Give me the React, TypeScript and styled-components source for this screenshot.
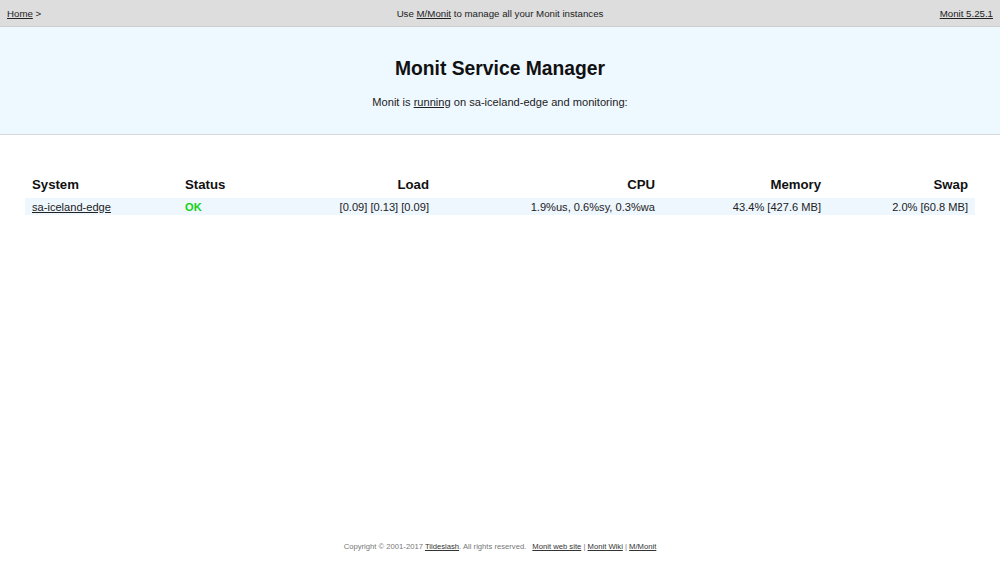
import styled, { createGlobalStyle } from "styled-components";

const GlobalStyle = createGlobalStyle`
  html, body {
    margin: 0;
    padding: 0;
    background: #ffffff;
    font-family: "Liberation Sans", Arial, Helvetica, sans-serif;
    color: #222;
  }
`;

const Page = styled.div`
  display: flex;
  flex-direction: column;
  min-height: 100vh;
`;

const TopBar = styled.div`
  display: flex;
  align-items: center;
  justify-content: space-between;
  height: 26px;
  padding: 0 7px;
  background: #dddddd;
  border-bottom: 1px solid #cfcfcf;
  font-size: 9.7px;
  color: #222;
`;

const TopCell = styled.div<{ $align: "left" | "center" | "right" }>`
  flex: 1;
  text-align: ${({ $align }) => $align};
`;

const Link = styled.a`
  color: #222;
  text-decoration: underline;
`;

const Header = styled.div`
  background: #eef8ff;
  border-bottom: 1px solid #d4d8dc;
  height: 107px;
  display: flex;
  flex-direction: column;
  align-items: center;
`;

const Title = styled.h1`
  margin: 30px 0 0;
  font-size: 19.3px;
  font-weight: bold;
  color: #111;
  line-height: 24px;
`;

const Subtitle = styled.p`
  margin: 15px 0 0;
  font-size: 11.1px;
  color: #222;
`;

const Content = styled.div`
  padding: 37px 25px 0;
`;

const Table = styled.table`
  width: 100%;
  border-collapse: collapse;
  table-layout: fixed;
`;

const Th = styled.th<{ $right?: boolean }>`
  font-size: 13.2px;
  font-weight: bold;
  color: #111;
  padding: 5px 7px 6px;
  text-align: ${({ $right }) => ($right ? "right" : "left")};
`;

const Row = styled.tr`
  background: #eef6fe;
`;

const Td = styled.td<{ $right?: boolean }>`
  font-size: 11.1px;
  color: #222;
  height: 17px;
  padding: 0 7px;
  text-align: ${({ $right }) => ($right ? "right" : "left")};
`;

const Ok = styled.span`
  color: #11d211;
  font-weight: bold;
`;

const Footer = styled.div`
  margin-top: auto;
  padding-bottom: 23px;
  text-align: center;
  font-size: 7.66px;
  color: #777;
`;

const FooterLink = styled.a`
  color: #333;
  text-decoration: underline;
`;

const Links = styled.span`
  margin-left: 6px;
`;

export default function App() {
  return (
    <Page>
      <GlobalStyle />
      <TopBar>
        <TopCell $align="left">
          <Link href="#">Home</Link> &gt;
        </TopCell>
        <TopCell $align="center">
          Use <Link href="#">M/Monit</Link> to manage all your Monit instances
        </TopCell>
        <TopCell $align="right">
          <Link href="#">Monit 5.25.1</Link>
        </TopCell>
      </TopBar>
      <Header>
        <Title>Monit Service Manager</Title>
        <Subtitle>
          Monit is <Link href="#">running</Link> on sa-iceland-edge and monitoring:
        </Subtitle>
      </Header>
      <Content>
        <Table>
          <colgroup>
            <col style={{ width: 153 }} />
            <col style={{ width: 100 }} />
            <col style={{ width: 158 }} />
            <col style={{ width: 226 }} />
            <col style={{ width: 166 }} />
            <col style={{ width: 147 }} />
          </colgroup>
          <thead>
            <tr>
              <Th>System</Th>
              <Th>Status</Th>
              <Th $right>Load</Th>
              <Th $right>CPU</Th>
              <Th $right>Memory</Th>
              <Th $right>Swap</Th>
            </tr>
          </thead>
          <tbody>
            <Row>
              <Td>
                <Link href="#">sa-iceland-edge</Link>
              </Td>
              <Td>
                <Ok>OK</Ok>
              </Td>
              <Td $right>[0.09]&nbsp;[0.13]&nbsp;[0.09]</Td>
              <Td $right>1.9%us,&nbsp;0.6%sy,&nbsp;0.3%wa</Td>
              <Td $right>43.4% [427.6 MB]</Td>
              <Td $right>2.0% [60.8 MB]</Td>
            </Row>
          </tbody>
        </Table>
      </Content>
      <Footer>
        Copyright © 2001-2017 <FooterLink href="#">Tildeslash</FooterLink>. All rights reserved.
        <Links>
          <FooterLink href="#">Monit web site</FooterLink> | <FooterLink href="#">Monit Wiki</FooterLink> |{" "}
          <FooterLink href="#">M/Monit</FooterLink>
        </Links>
      </Footer>
    </Page>
  );
}
